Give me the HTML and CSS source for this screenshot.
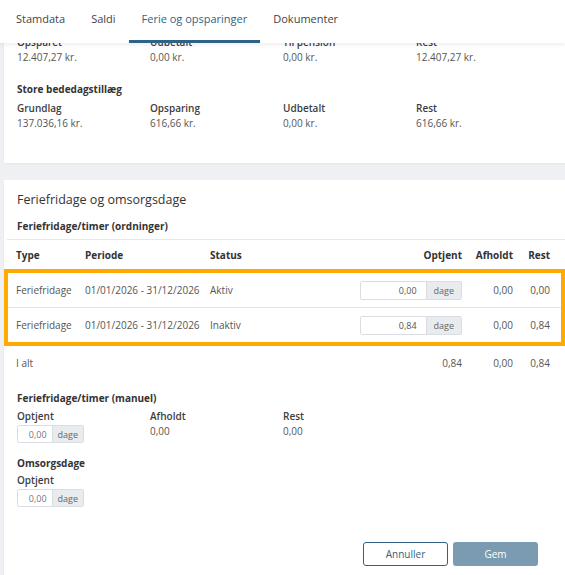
FILE: index.html
```html
<!DOCTYPE html>
<html lang="da">
<head>
  <meta charset="UTF-8">
  <meta name="viewport" content="width=device-width, initial-scale=1.0">
  <title>Ferie og opsparinger</title>
  <link rel="stylesheet" href="styles.css">
</head>
<body>
  <nav class="tabs">
    <a class="tab">Stamdata</a>
    <a class="tab">Saldi</a>
    <a class="tab active">Ferie og opsparinger</a>
    <a class="tab">Dokumenter</a>
  </nav>

  <main class="page">
    <section class="card summary">
      <div class="cols">
        <div><div class="label">Opsparet</div><div class="value">12.407,27 kr.</div></div>
        <div><div class="label">Udbetalt</div><div class="value">0,00 kr.</div></div>
        <div><div class="label">Til pension</div><div class="value">0,00 kr.</div></div>
        <div><div class="label">Rest</div><div class="value">12.407,27 kr.</div></div>
      </div>

      <h4 class="subhead">Store bededagstillæg</h4>
      <div class="cols">
        <div><div class="label">Grundlag</div><div class="value">137.036,16 kr.</div></div>
        <div><div class="label">Opsparing</div><div class="value">616,66 kr.</div></div>
        <div><div class="label">Udbetalt</div><div class="value">0,00 kr.</div></div>
        <div><div class="label">Rest</div><div class="value">616,66 kr.</div></div>
      </div>
    </section>

    <section class="card">
      <h3 class="card-title">Feriefridage og omsorgsdage</h3>
      <h4 class="subhead first">Feriefridage/timer (ordninger)</h4>

      <div class="table">
        <div class="trow thead">
          <div>Type</div>
          <div>Periode</div>
          <div>Status</div>
          <div class="num">Optjent</div>
          <div class="num">Afholdt</div>
          <div class="num">Rest</div>
        </div>
        <div class="highlight">
          <div class="trow">
            <div>Feriefridage</div>
            <div>01/01/2026 - 31/12/2026</div>
            <div>Aktiv</div>
            <div class="input-group wide"><input type="text" value="0,00"><span class="addon">dage</span></div>
            <div class="num">0,00</div>
            <div class="num">0,00</div>
          </div>
          <div class="trow">
            <div>Feriefridage</div>
            <div>01/01/2026 - 31/12/2026</div>
            <div>Inaktiv</div>
            <div class="input-group wide"><input type="text" value="0,84"><span class="addon">dage</span></div>
            <div class="num">0,00</div>
            <div class="num">0,84</div>
          </div>
        </div>
        <div class="trow total">
          <div>I alt</div>
          <div></div>
          <div></div>
          <div class="num">0,84</div>
          <div class="num">0,00</div>
          <div class="num">0,84</div>
        </div>
      </div>

      <h4 class="subhead manual">Feriefridage/timer (manuel)</h4>
      <div class="cols">
        <div>
          <div class="label">Optjent</div>
          <div class="input-group"><input type="text" value="0,00"><span class="addon">dage</span></div>
        </div>
        <div><div class="label">Afholdt</div><div class="value">0,00</div></div>
        <div><div class="label">Rest</div><div class="value">0,00</div></div>
      </div>

      <h4 class="subhead care">Omsorgsdage</h4>
      <div class="label">Optjent</div>
      <div class="input-group"><input type="text" value="0,00"><span class="addon">dage</span></div>

      <div class="actions">
        <button class="btn btn-outline">Annuller</button>
        <button class="btn btn-primary">Gem</button>
      </div>
    </section>
  </main>
</body>
</html>
```

FILE: styles.css
```css
body {
  margin: 0;
  font-family: "Open Sans", "Liberation Sans", sans-serif;
  font-size: 10px;
  color: #444;
  background: #eef0f4;
}

/* tab bar lies over the top of the first card */
.tabs {
  position: relative;
  z-index: 2;
  display: flex;
  height: 43px;
  padding-left: 3px;
  background: #fff;
  box-shadow: 0 2px 4px rgba(0, 0, 0, 0.07);
}
.tab {
  padding: 0 13px 2px;
  line-height: 38px;
  font-size: 11px;
  color: #444;
  border-bottom: 3px solid transparent;
}
.tab.active {
  color: #2f6386;
  border-bottom-color: #2f6386;
}

.page {
  padding-left: 4px;
}
.card {
  background: #fff;
  padding: 0 0 0 13px;
  box-shadow: 0 1px 2px rgba(0, 0, 0, 0.05);
}
.summary {
  margin-top: -8px;
  padding-bottom: 32px;
}
.card + .card {
  margin-top: 17px;
  padding-top: 11px;
  padding-bottom: 20px;
}

.cols {
  display: grid;
  grid-template-columns: 133px 133px 133px 1fr;
}
.label {
  font-weight: 600;
  line-height: 15px;
  color: #3d3d3d;
}
.value {
  line-height: 15px;
  color: #555;
}

.card-title {
  margin: 0;
  font-size: 12.5px;
  font-weight: 400;
  line-height: 18px;
  color: #333;
}
.subhead {
  margin: 17px 0 4px;
  font-size: 10px;
  font-weight: 700;
  line-height: 15px;
  color: #333;
}
.subhead.first {
  margin: 10px 0 5px;
}
.subhead.manual {
  margin-top: 11px;
  margin-bottom: 3px;
}
.subhead.care {
  margin-top: 13px;
  margin-bottom: 2px;
}

/* table */
.table {
  margin-left: -13px;
}
.trow {
  display: grid;
  grid-template-columns: 69px 125px 1fr 102px 51px 37px;
  align-items: center;
  height: 34px;
  padding: 0 15px 0 12px;
  color: #555;
}
.trow .num {
  text-align: right;
}
.thead {
  height: 29px;
  margin-left: 3px;
  padding-left: 9px;
  border-top: 1px solid #e6e8eb;
  font-weight: 700;
  color: #333;
}
.highlight {
  border: 4px solid #ffaa00;
}
.highlight .trow {
  padding: 0 11px 0 8px;
}
.highlight .trow + .trow {
  border-top: 1px solid #e3e5e8;
}

/* input with unit */
.input-group {
  display: flex;
  width: 67px;
  height: 18px;
  margin-top: 1px;
  border: 1px solid #dadde2;
  border-radius: 2px;
  box-sizing: border-box;
  overflow: hidden;
}
.input-group input {
  flex: 1;
  min-width: 0;
  padding: 0 5px 0 0;
  border: none;
  font: inherit;
  font-size: 9px;
  color: #777;
  text-align: right;
  background: #fff;
}
.input-group .addon {
  display: flex;
  align-items: center;
  padding: 0 5px;
  background: #e9ecef;
  border-left: 1px solid #dadde2;
  font-size: 9px;
  color: #666;
}
.input-group.wide {
  width: 102px;
  height: 19px;
  margin-top: 0;
}
.input-group.wide input {
  padding-right: 9px;
  color: #555;
}
.input-group.wide .addon {
  padding: 0 7px;
}

.actions {
  display: flex;
  justify-content: flex-end;
  gap: 5px;
  margin-top: 35px;
  padding-right: 27px;
}
.btn {
  width: 85px;
  height: 24px;
  border-radius: 3px;
  font: inherit;
  font-size: 10px;
  cursor: pointer;
}
.btn-outline {
  border: 1px solid #2f6386;
  background: #fff;
  color: #2f6386;
}
.btn-primary {
  border: none;
  background: #7a9bb1;
  color: #fff;
}
```
